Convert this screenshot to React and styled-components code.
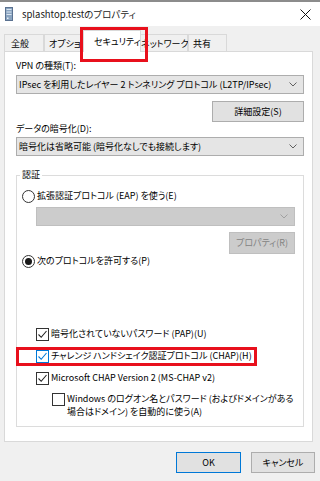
import React from 'react';
import styled, { createGlobalStyle } from 'styled-components';

const GlobalStyle = createGlobalStyle`
  html, body {
    margin: 0;
    padding: 0;
  }
  body {
    width: 320px;
    height: 481px;
    overflow: hidden;
    background: #f0f0f0;
    font-family: "Noto Sans CJK JP", "Noto Sans", sans-serif;
    font-size: 9px;
    font-feature-settings: "palt";
    color: #000;
  }
`;

const Window = styled.div`
  width: 320px;
  height: 481px;
  display: flex;
  flex-direction: column;
  background: #f0f0f0;
`;

const TitleBar = styled.div`
  height: 24px;
  border-top: 2px solid #8c8c8c;
  background: #fff;
  display: flex;
  align-items: center;
  padding: 0 9px 0 5px;
`;

const Title = styled.div`
  flex: 1;
  margin-left: 9px;
  font-size: 9.5px;
  line-height: 16px;
  color: #1a1a1a;
`;

const Body = styled.div`
  display: flex;
  flex-direction: column;
  padding: 0 7px 0 4px;
`;

const TabRow = styled.div`
  height: 26px;
  display: flex;
  align-items: flex-end;
  margin-bottom: -1px;
`;

const Tab = styled.div`
  position: relative;
  box-sizing: border-box;
  width: ${p => p.$w}px;
  height: ${p => (p.$active ? 22 : 18)}px;
  margin: 0 ${p => (p.$active ? -2 : 0)}px;
  padding: ${p => (p.$active ? '0 0 0 10px' : `1px 0 0 ${p.$pl}px`)};
  border: 1px solid #d9d9d9;
  border-bottom: ${p => (p.$active ? 'none' : '1px solid #d9d9d9')};
  background: ${p => (p.$active ? '#fff' : '#f0f0f0')};
  z-index: ${p => (p.$active ? 2 : 1)};
  display: flex;
  align-items: center;
  white-space: nowrap;
  line-height: 14px;
`;

const Highlight = styled.div`
  position: absolute;
  left: ${p => p.$l}px;
  top: ${p => p.$t}px;
  width: ${p => p.$w}px;
  height: ${p => p.$h}px;
  box-sizing: border-box;
  border: 3px solid #e8101c;
  pointer-events: none;
  z-index: 5;
`;

const Panel = styled.div`
  box-sizing: border-box;
  height: 391px;
  background: #fff;
  border: 1px solid #d9d9d9;
  padding: 7px 8px 0 11px;
  display: flex;
  flex-direction: column;
`;

const Label = styled.div`
  line-height: 14px;
  height: 14px;
  margin-top: ${p => p.$mt || 0}px;
`;

const Select = styled.div`
  box-sizing: border-box;
  height: 19px;
  margin-top: ${p => p.$mt || 0}px;
  margin-left: ${p => p.$ml || 0}px;
  border: 1px solid ${p => (p.$disabled ? '#bfbfbf' : '#adadad')};
  background: ${p => (p.$disabled ? '#cccccc' : '#e5e5e5')};
  display: flex;
  align-items: center;
  padding: 0 6px 0 2px;
  line-height: 14px;
  white-space: nowrap;
`;

const SelectText = styled.span`
  flex: 1;
`;

const Button = styled.div`
  box-sizing: border-box;
  align-self: flex-end;
  width: ${p => p.$w}px;
  height: ${p => p.$h || 21}px;
  margin-top: ${p => p.$mt || 0}px;
  border: 1px solid ${p => (p.$default ? '#0078d7' : p.$disabled ? '#bfbfbf' : '#adadad')};
  background: ${p => (p.$disabled ? '#cccccc' : '#e1e1e1')};
  color: ${p => (p.$disabled ? '#838383' : '#000')};
  display: flex;
  align-items: center;
  justify-content: center;
  line-height: 14px;
  white-space: nowrap;
`;

const Group = styled.fieldset`
  margin: 12px 0 0 0;
  padding: 6px 8px 8px 5px;
  border: 1px solid #dcdcdc;
  min-width: 0;
  display: flex;
  flex-direction: column;
`;

const Legend = styled.legend`
  padding: 0 2px;
  margin-left: -2px;
  line-height: 14px;
`;

const OptionRow = styled.div`
  position: relative;
  display: flex;
  align-items: center;
  height: ${p => p.$h || 14}px;
  margin-top: ${p => p.$mt || 0}px;
  margin-left: ${p => p.$ml || 0}px;
  white-space: nowrap;
  line-height: 14px;
`;

const Radio = styled.span`
  box-sizing: border-box;
  width: 13px;
  height: 13px;
  border-radius: 50%;
  border: 1px solid #333;
  background: #fff;
  margin-right: 2px;
  display: flex;
  align-items: center;
  justify-content: center;
  &::after {
    content: '';
    display: ${p => (p.$checked ? 'block' : 'none')};
    width: 7px;
    height: 7px;
    border-radius: 50%;
    background: #1a1a1a;
  }
`;

const Box = styled.span`
  box-sizing: border-box;
  flex: 0 0 auto;
  width: 13px;
  height: 13px;
  border: 1px solid ${p => (p.$focus ? '#0078d7' : '#333')};
  background: #fff;
  margin-right: 2px;
  display: flex;
  align-items: center;
  justify-content: center;
`;

const WinItem = styled.div`
  display: flex;
  align-items: flex-start;
  margin: 4px 0 0 30px;
`;

const WinText = styled.div`
  line-height: 13px;
  white-space: nowrap;
  margin-top: -1px;
`;

const Footer = styled.div`
  display: flex;
  justify-content: flex-end;
  gap: 10px;
  margin: 10px -2px 0 0;
`;

const Chevron = ({ color = '#606060' }) => (
  <svg width="8" height="5" viewBox="0 0 8 5">
    <path d="M0.5 0.5 L4 4 L7.5 0.5" fill="none" stroke={color} strokeWidth="1" />
  </svg>
);

const Checkbox = ({ checked, focus }) => (
  <Box $focus={focus}>
    {checked && (
      <svg width="11" height="11" viewBox="0 0 11 11">
        <path d="M1.5 5.5 L4.2 8.3 L9.5 2" fill="none" stroke={focus ? '#0078d7' : '#222'} strokeWidth="1.1" />
      </svg>
    )}
  </Box>
);

const AppIcon = () => (
  <svg width="8" height="14" viewBox="0 0 8 14">
    <rect x="0.5" y="0.5" width="7" height="13" fill="#8aa4c0" stroke="#5a7190" />
    <rect x="1.5" y="2" width="5" height="1" fill="#dbe6f2" />
    <rect x="1.5" y="4.5" width="5" height="1" fill="#dbe6f2" />
    <rect x="1.5" y="7" width="5" height="1" fill="#dbe6f2" />
    <rect x="2" y="10.5" width="1.5" height="1.5" fill="#e8f0f8" />
  </svg>
);

const CloseIcon = () => (
  <svg width="11" height="11" viewBox="0 0 11 11">
    <path d="M0.5 0.5 L10.5 10.5 M10.5 0.5 L0.5 10.5" stroke="#111" strokeWidth="1" />
  </svg>
);

const tabs = [
  { label: '全般', w: 40, pl: 6 },
  { label: 'オプション', w: 41, pl: 4 },
  { label: 'セキュリティ', w: 58, active: true },
  { label: 'ネットワーク', w: 49, pl: 1 },
  { label: '共有', w: 39, pl: 4 },
];

export default function App() {
  return (
    <Window>
      <GlobalStyle />
      <TitleBar>
        <AppIcon />
        <Title>splashtop.testのプロパティ</Title>
        <CloseIcon />
      </TitleBar>
      <Body>
        <TabRow>
          {tabs.map(t => (
            <Tab key={t.label} $w={t.w} $pl={t.pl} $active={t.active}>
              {t.label}
              {t.active && <Highlight $l={-4} $t={-4} $w={68} $h={35} />}
            </Tab>
          ))}
        </TabRow>
        <Panel>
          <Label>VPN の種類(T):</Label>
          <Select $mt={2}>
            <SelectText>IPsec を利用したレイヤー 2 トンネリング プロトコル (L2TP/IPsec)</SelectText>
            <Chevron />
          </Select>
          <Button $w={92} $mt={7}>詳細設定(S)</Button>
          <Label>データの暗号化(D):</Label>
          <Select $mt={1}>
            <SelectText>暗号化は省略可能 (暗号化なしでも接続します)</SelectText>
            <Chevron />
          </Select>
          <Group>
            <Legend>認証</Legend>
            <OptionRow $h={16}>
              <Radio />
              拡張認証プロトコル (EAP) を使う(E)
            </OptionRow>
            <Select $mt={3} $ml={14} $disabled>
              <SelectText />
              <Chevron color="#a0a0a0" />
            </Select>
            <Button $w={66} $h={22} $mt={6} $disabled>プロパティ(R)</Button>
            <OptionRow>
              <Radio $checked />
              次のプロトコルを許可する(P)
            </OptionRow>
            <OptionRow $h={22} $mt={55} $ml={14}>
              <Checkbox checked />
              暗号化されていないパスワード (PAP)(U)
            </OptionRow>
            <OptionRow $h={22} $ml={14}>
              <Checkbox checked focus />
              チャレンジ ハンドシェイク認証プロトコル (CHAP)(H)
              <Highlight $l={-20} $t={2} $w={241} $h={19} />
            </OptionRow>
            <OptionRow $h={22} $ml={14}>
              <Checkbox checked />
              Microsoft CHAP Version 2 (MS-CHAP v2)
            </OptionRow>
            <WinItem>
              <Checkbox />
              <WinText>
                Windows のログオン名とパスワード (およびドメインがある
                <br />
                場合はドメイン) を自動的に使う(A)
              </WinText>
            </WinItem>
          </Group>
        </Panel>
        <Footer>
          <Button $w={65} $default>OK</Button>
          <Button $w={64}>キャンセル</Button>
        </Footer>
      </Body>
    </Window>
  );
}
